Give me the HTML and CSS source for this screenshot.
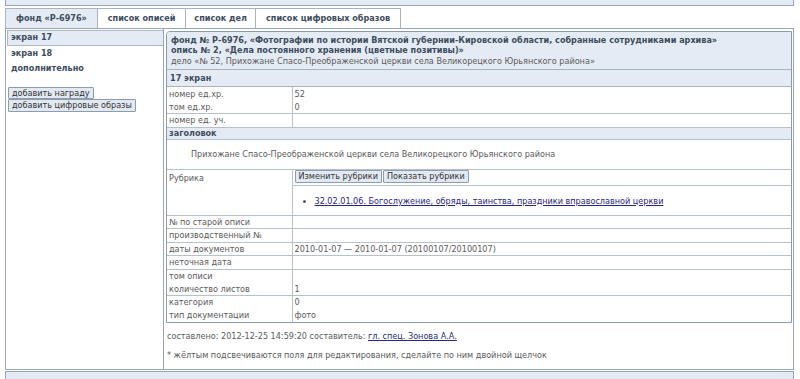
FILE: index.html
```html
<!DOCTYPE html>
<html lang="ru">
<head>
<meta charset="utf-8">
<title>фонд Р-6976</title>
<link rel="stylesheet" href="styles.css">
</head>
<body>
<div class="page">
  <div class="topbar"></div>
  <div class="tabs">
    <div class="tab active">фонд «Р-6976»</div>
    <div class="tab">список описей</div>
    <div class="tab tab-narrow">список дел</div>
    <div class="tab">список цифровых образов</div>
  </div>
  <div class="main">
    <div class="left">
      <div class="nav-item active">экран 17</div>
      <div class="nav-item">экран 18</div>
      <div class="nav-item">дополнительно</div>
      <div class="left-buttons">
        <button class="btn">добавить награду</button>
        <button class="btn">добавить цифровые образы</button>
      </div>
    </div>
    <div class="right">
      <div class="card">
        <div class="card-head">
          <div class="h-bold">фонд № Р-6976, «Фотографии по истории Вятской губернии-Кировской области, собранные сотрудниками архива»</div>
          <div class="h-bold">опись № 2, «Дела постоянного хранения (цветные позитивы)»</div>
          <div class="h-sub">дело «№ 52, Прихожане Спасо-Преображенской церкви села Великорецкого Юрьянского района»</div>
        </div>
        <div class="sect">17 экран</div>
        <table class="data">
          <tr class="nb"><td class="lbl">номер ед.хр.</td><td>52</td></tr>
          <tr><td class="lbl">том ед.хр.</td><td>0</td></tr>
          <tr><td class="lbl">номер ед. уч.</td><td></td></tr>
          <tr><td colspan="2" class="sect-cell">заголовок</td></tr>
          <tr><td colspan="2" class="title-cell">Прихожане Спасо-Преображенской церкви села Великорецкого Юрьянского района</td></tr>
          <tr>
            <td class="lbl top">Рубрика</td>
            <td class="rub">
              <div class="rub-buttons">
                <button class="btn">Изменить рубрики</button><button class="btn">Показать рубрики</button>
              </div>
              <ul class="rub-list">
                <li><a href="#">32.02.01.06. Богослужение, обряды, таинства, праздники вправославной церкви</a></li>
              </ul>
            </td>
          </tr>
          <tr><td class="lbl">№ по старой описи</td><td></td></tr>
          <tr><td class="lbl">производственный №</td><td></td></tr>
          <tr><td class="lbl">даты документов</td><td>2010-01-07 — 2010-01-07 (20100107/20100107)</td></tr>
          <tr><td class="lbl">неточная дата</td><td></td></tr>
          <tr class="nb"><td class="lbl">том описи</td><td></td></tr>
          <tr><td class="lbl">количество листов</td><td>1</td></tr>
          <tr class="nb"><td class="lbl">категория</td><td>0</td></tr>
          <tr><td class="lbl">тип документации</td><td>фото</td></tr>
        </table>
      </div>
      <p class="note">составлено: 2012-12-25 14:59:20 составитель: <a href="#">гл. спец. Зонова А.А.</a></p>
      <p class="note">* жёлтым подсвечиваются поля для редактирования, сделайте по ним двойной щелчок</p>
    </div>
  </div>
  <div class="bottombar"></div>
</div>
</body>
</html>
```
FILE: styles.css
```css
* { box-sizing: border-box; }
body {
  margin: 0;
  font-family: "DejaVu Sans", Verdana, sans-serif;
  font-size: 8.1px;
  color: #5a5a5a;
  background: #fff;
}
.page {
  margin-left: 5px;
  width: 789px;
}
.topbar {
  height: 6px;
  background: #e5ebf4;
  border: 1px solid #98a5b4;
  border-top: 0;
}
.tabs {
  display: flex;
  margin-top: 2px;
}
.tab {
  height: 20px;
  line-height: 19px;
  border: 1px solid #a9b3bf;
  border-bottom: 0;
  margin-left: -1px;
  padding: 0 10px;
  font-weight: bold;
  color: #3d4b5c;
}
.tab:first-child { margin-left: 0; }
.tab.tab-narrow { padding: 0 8px; }
.tab.active { background: #e5ebf4; }
.main {
  display: flex;
  border: 1px solid #98a5b4;
  height: 342px;
}
.left {
  width: 158px;
  flex: none;
  border-right: 1px solid #98a5b4;
  padding-top: 1px;
}
.nav-item {
  height: 15.5px;
  line-height: 15px;
  padding-left: 4px;
  margin-left: 1px;
  font-weight: bold;
  color: #3d4b5c;
}
.nav-item.active {
  background: #e5ebf4;
  border: 1px solid #aeb8c4;
  border-right: 0;
  padding-left: 3px;
  line-height: 13px;
}
.left-buttons {
  margin-top: 10px;
  padding-left: 2px;
}
.btn {
  display: inline-block;
  font-family: inherit;
  font-size: 8.1px;
  color: #333;
  background: #e3e9f2;
  border: 1px solid #8e9bab;
  border-radius: 1px;
  height: 12.5px;
  line-height: 10px;
  padding: 0 3px;
  margin: 0;
  vertical-align: top;
}
.left-buttons .btn { display: block; }
.right {
  flex: 1;
  min-width: 0;
  padding: 2px 1px 0 2px;
}
.card {
  border: 1px solid #8d9aab;
  border-top-left-radius: 4px;
  overflow: hidden;
}
.card-head {
  background: #e5ebf4;
  padding: 4px 4px 3px 4px;
  border-bottom: 1px solid #a8b3c0;
}
.h-bold {
  font-weight: bold;
  color: #3d4b5c;
  line-height: 9.5px;
}
.h-sub {
  line-height: 10px;
  margin-top: 1px;
}
.sect {
  background: #e5ebf4;
  font-weight: bold;
  color: #3d4b5c;
  height: 17px;
  line-height: 17px;
  padding-left: 3px;
  border-bottom: 1px solid #a8b3c0;
}
.data {
  width: 100%;
  border-collapse: collapse;
}
.data td {
  border-bottom: 1px solid #b8c1cb;
  padding: 0 2px;
  height: 13.5px;
  line-height: 12px;
  vertical-align: middle;
}
.data tr.nb td { border-bottom: 0; height: 13px; }
.data tr:last-child td { border-bottom: 0; }
.data td.lbl {
  width: 125px;
  border-right: 1px solid #b8c1cb;
}
.data td.top { vertical-align: top; padding-top: 2px; }
.data td.sect-cell {
  background: #e5ebf4;
  font-weight: bold;
  color: #3d4b5c;
  height: 12px;
  line-height: 11px;
}
.data td.title-cell {
  height: 30px;
  padding-left: 24px;
}
.data td.rub { padding: 0; vertical-align: top; }
.rub-buttons {
  padding: 0 2px 0 2px;
  border-bottom: 1px solid #b8c1cb;
  height: 16px;
}
.rub-buttons .btn { height: 13.5px; margin-right: 1px; }
.rub-list {
  margin: 0;
  padding: 9px 0 8px 22px;
  list-style: disc;
  line-height: 12px;
}
a { color: #27277a; text-decoration: underline; }
.note {
  margin: 8px 0 0 1px;
  line-height: 10px;
}
.note + .note { margin-top: 9px; }
.bottombar {
  height: 10px;
  background: #e5ebf4;
  border: 1px solid #98a5b4;
  border-bottom: 0;
  margin-top: 1px;
}
```
